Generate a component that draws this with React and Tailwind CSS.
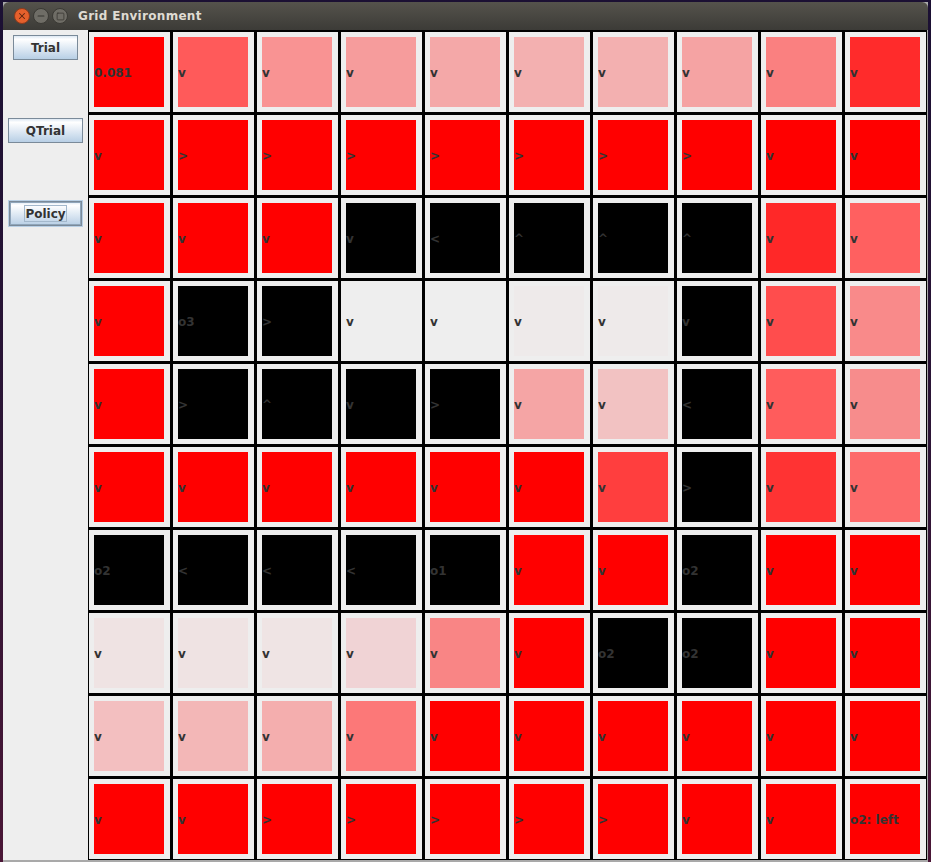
import React from "react";
import { Minus, Square, X } from "lucide-react";

const R = "#ff0000";
const K = "#000000";

const rows = [
  {
    labels: ["0.081", "v", "v", "v", "v", "v", "v", "v", "v", "v"],
    colors: [R, "#ff5a5a", "#f99393", "#f69c9c", "#f4a8a8", "#f3b0b0", "#f3b0b0", "#f5a3a3", "#fa8080", "#ff2b2b"],
  },
  {
    labels: ["v", ">", ">", ">", ">", ">", ">", ">", "v", "v"],
    colors: [R, R, R, R, R, R, R, R, R, R],
  },
  {
    labels: ["v", "v", "v", "v", "<", "^", "^", "^", "v", "v"],
    colors: [R, R, R, K, K, K, K, K, "#ff2828", "#ff6060"],
  },
  {
    labels: ["v", "o3", ">", "v", "v", "v", "v", "v", "v", "v"],
    colors: [R, K, K, "#eeeeee", "#eeeeee", "#eeeaea", "#eeeaea", K, "#ff4d4d", "#f98a8a"],
  },
  {
    labels: ["v", ">", "^", "v", ">", "v", "v", "<", "v", "v"],
    colors: [R, K, K, K, K, "#f5a5a5", "#f2c2c2", K, "#ff5c5c", "#f78c8c"],
  },
  {
    labels: ["v", "v", "v", "v", "v", "v", "v", ">", "v", "v"],
    colors: [R, R, R, R, R, R, "#ff3e3e", K, "#ff3333", "#fd6a6a"],
  },
  {
    labels: ["o2", "<", "<", "<", "o1", "v", "v", "o2", "v", "v"],
    colors: [K, K, K, K, K, R, R, K, R, R],
  },
  {
    labels: ["v", "v", "v", "v", "v", "v", "o2", "o2", "v", "v"],
    colors: ["#efe3e3", "#efe3e3", "#efe4e4", "#f0d3d5", "#f98585", R, K, K, R, R],
  },
  {
    labels: ["v", "v", "v", "v", "v", "v", "v", "v", "v", "v"],
    colors: ["#f3bfc0", "#f3b7b7", "#f4aeae", "#fc7878", R, R, R, R, R, R],
  },
  {
    labels: ["v", "v", ">", ">", ">", ">", ">", "v", "v", "o2: left"],
    colors: [R, R, R, R, R, R, R, R, R, R],
  },
];

const Cell = ({ label, color }) => (
  <div className="bg-[#eeeeee] pl-[5px] pr-[6px] py-[5px]">
    <div
      className="h-full pt-[2px] flex items-center whitespace-nowrap text-[12px] font-bold text-[#333333] overflow-hidden"
      style={{ backgroundColor: color }}
    >
      {label}
    </div>
  </div>
);

const ControlButton = ({ label, width, focused }) => (
  <button
    className={`${width} h-[25px] flex items-center justify-center border border-[#7a8a99] bg-[linear-gradient(180deg,#dde8f3_0%,#ffffff_14%,#dde8f3_55%,#b8cfe5_100%)] text-[12px] font-bold text-[#333333] ${
      focused ? "ring-1 ring-inset ring-[#8fa5ba] outline outline-1 outline-[#b8cfe5]" : ""
    }`}
  >
    {focused ? (
      <span className="w-[43px] h-[17px] flex items-center justify-center border border-[#a3b8cc]">{label}</span>
    ) : (
      label
    )}
  </button>
);

export default function App() {
  return (
    <div className="w-[931px] h-[862px] overflow-hidden bg-[linear-gradient(180deg,#1b1033_0%,#2c1536_50%,#4a1636_100%)] pt-[2px] pl-[3px] font-['DejaVu_Sans',sans-serif]">
      <div className="w-[925px] h-[860px] flex flex-col bg-[#a9a9a9]">
        <div className="h-[28px] shrink-0 flex items-center rounded-t-[6px] bg-[linear-gradient(180deg,#55534c_0%,#3c3b37_100%)] pl-[11px]">
          <div className="flex items-center gap-[3px]">
            <span className="w-[16px] h-[16px] rounded-full flex items-center justify-center bg-[#e5602c] border border-[#8c3a1c]">
              <X size={10} strokeWidth={2.5} color="#5c2410" />
            </span>
            <span className="w-[16px] h-[16px] rounded-full flex items-center justify-center bg-[#6f6d66] border border-[#3a3934]">
              <Minus size={10} strokeWidth={2.5} color="#35342f" />
            </span>
            <span className="w-[16px] h-[16px] rounded-full flex items-center justify-center bg-[#6f6d66] border border-[#3a3934]">
              <Square size={9} strokeWidth={2} color="#35342f" />
            </span>
          </div>
          <span className="ml-[10px] text-[12px] font-bold text-[#dfdbd2] tracking-[0.3px]">
            Grid Environment
          </span>
        </div>
        <div className="flex h-[830px] items-start">
          <div className="w-[85px] h-full shrink-0 bg-[#eeeeee] flex flex-col items-center pt-[5px] gap-[58px]">
            <ControlButton label="Trial" width="w-[65px]" />
            <ControlButton label="QTrial" width="w-[75px]" />
            <ControlButton label="Policy" width="w-[73px]" focused />
          </div>
          <div className="bg-black pt-[2px] pb-[1px] pl-[1px] pr-[1px] grid grid-cols-[repeat(10,81px)] auto-rows-[80px] gap-[3px]">
            {rows.map((row, r) =>
              row.labels.map((label, c) => (
                <Cell key={`${r}-${c}`} label={label} color={row.colors[c]} />
              ))
            )}
          </div>
        </div>
      </div>
    </div>
  );
}
